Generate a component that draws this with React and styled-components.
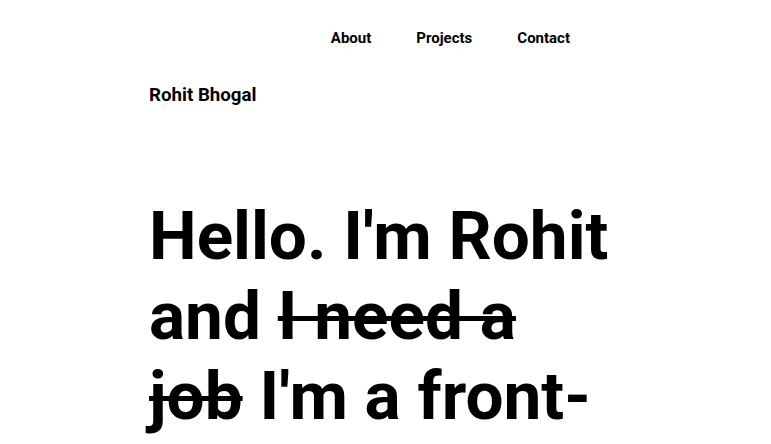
import React from 'react';
import styled, { createGlobalStyle } from 'styled-components';

const GlobalStyle = createGlobalStyle`
  html, body {
    margin: 0;
    padding: 0;
    background: #fff;
    color: #000;
    font-family: Roboto, "Noto Sans", sans-serif;
  }
`;

const Page = styled.div`
  width: 473px;
  margin: 0 auto;
`;

const Nav = styled.nav`
  display: flex;
  justify-content: flex-end;
  gap: 45px;
  padding: 29px 52px 0 0;
`;

const NavLink = styled.a`
  font-size: 15px;
  font-weight: 700;
  color: #000;
  text-decoration: none;
  line-height: 19px;
`;

const Brand = styled.div`
  margin-top: 36px;
  font-size: 18.7px;
  font-weight: 700;
  line-height: 22px;
`;

const Headline = styled.h1`
  margin: 90px 0 0;
  font-size: 67.5px;
  font-weight: 700;
  line-height: 80px;
`;

const Struck = styled.s`
  text-decoration-thickness: 5px;
`;

export default function App() {
  return (
    <>
      <GlobalStyle />
      <Page>
        <Nav>
          <NavLink href="#about">About</NavLink>
          <NavLink href="#projects">Projects</NavLink>
          <NavLink href="#contact">Contact</NavLink>
        </Nav>
        <Brand>Rohit Bhogal</Brand>
        <Headline>
          Hello. I'm Rohit and <Struck>I need a job</Struck> I'm a front-end developer
        </Headline>
      </Page>
    </>
  );
}
